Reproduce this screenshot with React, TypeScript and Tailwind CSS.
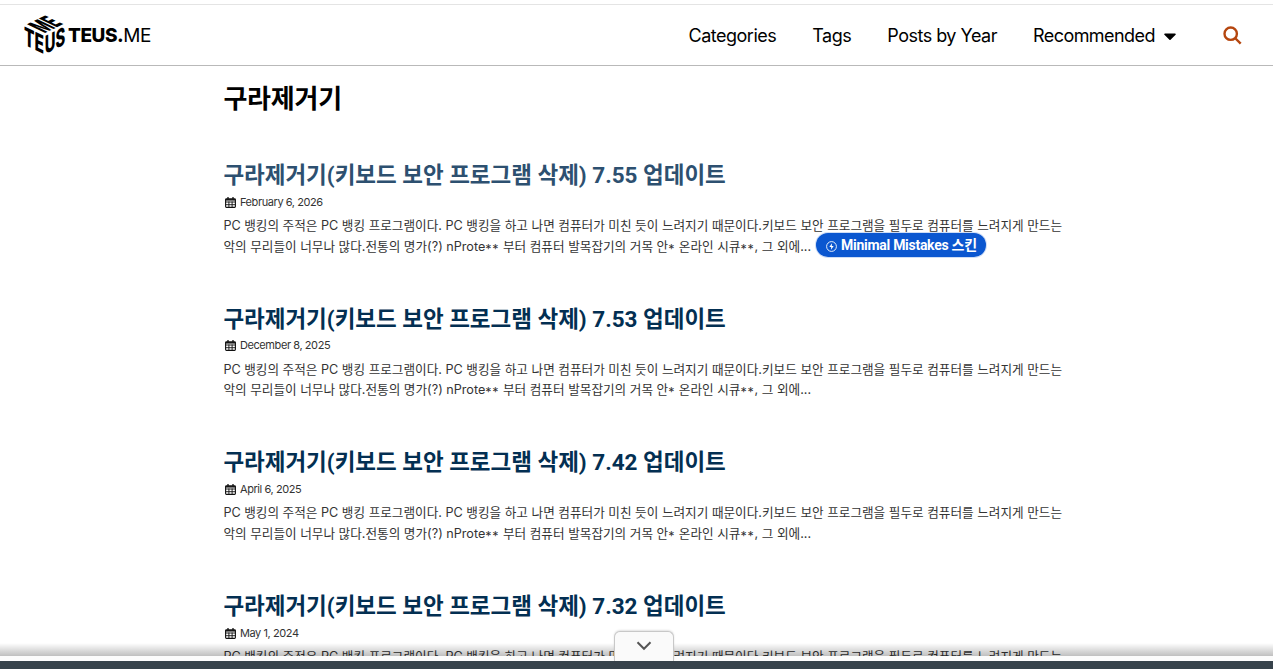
import { FaCaretDown } from "react-icons/fa";

const posts = [
    { version: "7.55", date: "February 6, 2026", hovered: true },
    { version: "7.53", date: "December 8, 2025" },
    { version: "7.42", date: "April 6, 2025" },
    { version: "7.32", date: "May 1, 2024" },
];

function Logo() {
    return (
        <div className="flex items-center">
            <svg width="42" height="56" viewBox="0 -7 42 56" className="overflow-visible font-['Inter','Liberation_Sans',sans-serif] font-extrabold">
                {/* Left face */}
                <text transform="matrix(1 0.48 0 1 0 30.5)" fontSize="25" textLength="20" lengthAdjust="spacingAndGlyphs">TE</text>
                {/* Right face */}
                <text transform="matrix(1 -0.48 0 1 20.7 40.2)" fontSize="25" textLength="20.5" lengthAdjust="spacingAndGlyphs">US</text>
                {/* Top face */}
                <text transform="matrix(1 -0.48 1 0.48 20.5 19.3)" fontSize="25" textLength="19.5" lengthAdjust="spacingAndGlyphs">ME</text>
            </svg>
            <span className="ml-0.5 text-[19px] leading-none font-extrabold tracking-[-0.45px]">
                TEUS.<span className="font-normal">ME</span>
            </span>
        </div>
    );
}

function CalendarIcon() {
    return (
        <svg width="11" height="11" viewBox="0 0 11 11" fill="none" stroke="#111">
            <path d="M3 0v2.5M8 0v2.5" strokeWidth="1.3" />
            <rect x="0.6" y="1.9" width="9.8" height="8.5" rx="0.8" strokeWidth="1.1" />
            <path d="M0.5 2.8h10" strokeWidth="1.5" />
            <path d="M0.5 5h10M0.5 7.7h10M3.9 4.5v6M7.1 4.5v6" strokeWidth="0.9" />
        </svg>
    );
}

function Stars({ count }: { count: number }) {
    return <span className="align-[-2.5px] text-[12.5px] leading-none tracking-[0.8px]">{"*".repeat(count)}</span>;
}

function SkinBadge() {
    return (
        <span className="-mt-1.5 -mb-0.5 ml-[5px] flex h-[24px] w-[170px] items-center gap-1 rounded-full bg-[#0b57d0] pl-2.5 font-['Roboto','Noto_Sans_CJK_KR',sans-serif] text-sm font-bold tracking-[-0.28px] text-white ring-1 ring-[#0b57d0]/20">
            <svg className="mt-[3px]" width="11" height="11" viewBox="0 0 11 11" fill="none" stroke="white">
                <circle cx="5.5" cy="5.5" r="4.9" strokeWidth="0.9" />
                <path d="M6 2.2L3.3 6h1.9L5 8.8L7.7 5H5.8z" fill="white" stroke="none" />
            </svg>
            Minimal Mistakes 스킨
        </span>
    );
}

export default function App() {
    return (
        <div className="relative flex h-[669px] w-[1273px] flex-col overflow-hidden bg-white font-['Inter','Noto_Sans_CJK_KR',sans-serif] text-black">
            <div className="h-[5px] shrink-0 border-b border-[#e4e4e4]" />
            <header className="flex h-[61px] shrink-0 items-center justify-between border-b border-[#b9b9b9] pr-[31px] pl-6">
                <Logo />
                <nav className="flex items-center text-lg tracking-[-0.5px]">
                    <a className="mt-0.5 mr-[36px]">Categories</a>
                    <a className="mt-0.5 mr-[36px]">Tags</a>
                    <a className="mt-0.5 mr-[36px]">Posts by Year</a>
                    <a className="mt-0.5 flex items-center gap-[5px]">
                        <span className="tracking-[-0.55px]">Recommended</span>
                        <FaCaretDown className="text-xl" />
                    </a>
                    <svg className="ml-[43px]" width="19" height="19" viewBox="0 0 19 19" fill="none" stroke="#b5460f" strokeWidth="2.4">
                        <circle cx="7.7" cy="7.7" r="6.2" />
                        <path d="M12 12l5.7 5.7" />
                    </svg>
                </nav>
            </header>

            <main className="h-[590px] shrink-0 overflow-hidden pl-[223.4px]">
                <h1 className="mt-[15px] text-[26px] leading-9 font-bold tracking-[-0.2px]">구라제거기</h1>
                <div className="mt-[41px] flex flex-col">
                    {posts.map((post) => (
                        <article key={post.version} className="h-[143.7px] shrink-0">
                            <h2 className={`h-[35px] font-['Roboto','Noto_Sans_CJK_KR',sans-serif] text-[22.5px] leading-[34px] font-bold tracking-[-0.02px] whitespace-nowrap ${post.hovered ? "text-[#2d5070]" : "text-[#032f52]"}`}>
                                구라제거기(키보드 보안 프로그램 삭제) {post.version} 업데이트
                            </h2>
                            <p className="flex h-[18px] items-center gap-1 pl-[1.6px] text-[11px] tracking-[-0.42px] text-[#333]">
                                <CalendarIcon />
                                {post.date}
                            </p>
                            <div className="mt-[5px] text-[12.63px] leading-[20.8px] whitespace-nowrap text-[#333]">
                                <p>PC 뱅킹의 주적은 PC 뱅킹 프로그램이다. PC 뱅킹을 하고 나면 컴퓨터가 미친 듯이 느려지기 때문이다.키보드 보안 프로그램을 필두로 컴퓨터를 느려지게 만드는</p>
                                <div className="flex h-[20.8px] items-center">
                                    <p>
                                        악의 무리들이 너무나 많다.전통의 명가(?) nProte<Stars count={2} /> 부터 컴퓨터 발목잡기의 거목 안<Stars count={1} /> 온라인 시큐<Stars count={2} />, 그 외에...
                                    </p>
                                    {post.hovered && <SkinBadge />}
                                </div>
                            </div>
                        </article>
                    ))}
                </div>
            </main>
            <div className="h-[5px] shrink-0 bg-[#fcfcfc]" />
            <div className="h-2 shrink-0 bg-[#37424b]" />

            {/* Shadow and pull-up handle of the bottom panel */}
            <div className="absolute bottom-[13px] left-0 h-[13px] w-full bg-linear-to-b from-black/0 to-black/25" />
            <div className="absolute bottom-2 left-[614px] flex h-[30px] w-[60px] justify-center rounded-t-[6px] border border-b-0 border-[#c8c8c8] bg-[#fafafa] pt-[9px] shadow-[0_-1px_2px_rgba(0,0,0,0.12)]">
                <svg width="16" height="10" viewBox="0 0 16 10" fill="none" stroke="#555" strokeWidth="2">
                    <path d="M1.5 1.2L8 7.8L14.5 1.2" />
                </svg>
            </div>
        </div>
    );
}
